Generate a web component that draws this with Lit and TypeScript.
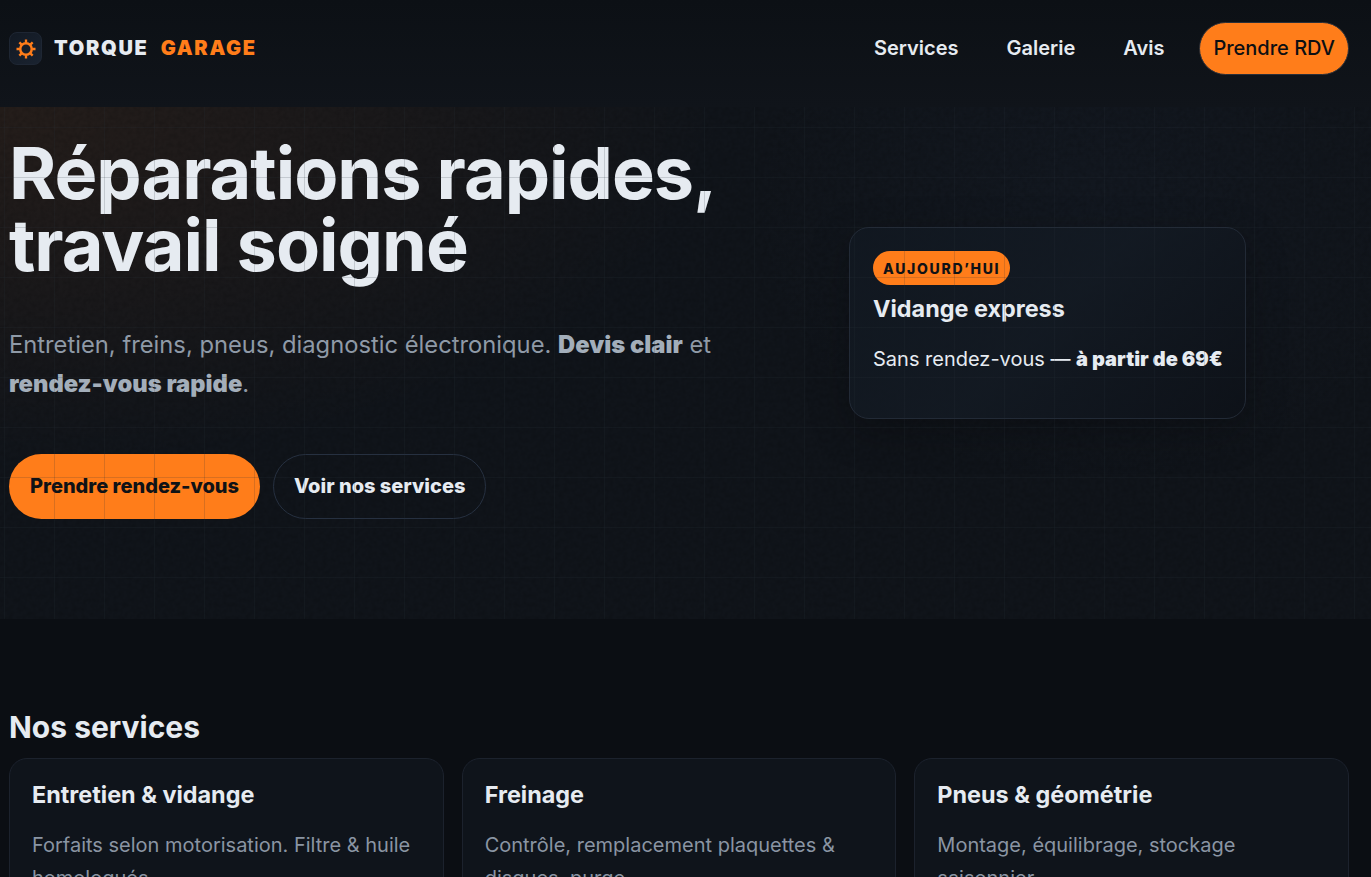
import { LitElement, html, css, unsafeCSS } from "lit";
import { customElement } from "lit/decorators.js";

const noise = unsafeCSS(`url("data:image/svg+xml,%3Csvg xmlns='http://www.w3.org/2000/svg' width='300' height='300'%3E%3Cfilter id='n'%3E%3CfeTurbulence type='fractalNoise' baseFrequency='.22' numOctaves='2' stitchTiles='stitch'/%3E%3CfeColorMatrix values='0 0 0 0 0  0 0 0 0 0  0 0 0 0 0  1.6 0 0 0 -.55'/%3E%3C/filter%3E%3Crect width='300' height='300' opacity='.16' filter='url(%23n)'/%3E%3C/svg%3E")`);

@customElement("app-root")
export class AppRoot extends LitElement {
  static styles = css`
    :host {
      display: block;
      min-height: 877px;
      background: #0b0e13;
      color: #e6ebf1;
      font-family: Inter, "Liberation Sans", sans-serif;
    }
    header {
      height: 107px;
      display: flex;
      align-items: flex-start;
      justify-content: space-between;
      padding: 22px 22px 0 9px;
      background: linear-gradient(180deg, #0c1015, #10141a);
      box-sizing: border-box;
    }
    .brand { display: flex; align-items: center; gap: 12px; height: 53px; }
    .logo {
      width: 33px; height: 33px; box-sizing: border-box;
      border-radius: 8px;
      border: 1px solid #1e2633;
      background: linear-gradient(135deg, #121923, #1a2330);
      display: flex; align-items: center; justify-content: center;
    }
    .logo svg { width: 20px; height: 20px; display: block; }
    .name {
      font-weight: 900; font-size: 20px; letter-spacing: 1.7px; word-spacing: 6.5px; white-space: pre;
      padding-bottom: 2px;
    }
    .name b { color: #ff7d1a; font-weight: 900; }
    nav { display: flex; align-items: center; gap: 48px; height: 53px; }
    nav a { font-weight: 600; font-size: 20px; color: #e6ebf1; padding-bottom: 2px; }
    nav a.rdv {
      background: #ff7d1a; color: #0c0f13; font-weight: 500; font-size: 20px;
      height: 53px; padding: 0 13px 2px; border-radius: 27px;
      display: flex; align-items: center; margin-left: -13px;
      border: 1px solid #2a2f38; box-sizing: border-box;
    }
    .hero {
      position: relative;
      height: 512px;
      box-sizing: border-box;
      padding: 29px 125px 100px 9px;
      display: grid;
      grid-template-columns: 1fr 397px;
      align-items: center;
      background:
        ${noise},
        radial-gradient(1000px 500px at 0% 0%, rgba(255,125,26,.085), transparent 72%),
        radial-gradient(500px 400px at 80% 20%, rgba(60,90,140,.05), transparent 70%),
        #10141a;
      overflow: hidden;
    }
    h1 {
      margin: 1px 0 0;
      font-size: 72px; line-height: 72px; font-weight: 700; letter-spacing: -1px;
      color: #e6ebf1;
    }
    .lead {
      margin: 44.3px 0 0;
      font-size: 23.76px; line-height: 39px; color: #8f9aa7; font-weight: 400; max-width: 720px;
    }
    .lead b { font-weight: 900; color: #a3aeba; }
    .cta { display: flex; gap: 13px; margin-top: 50.7px; }
    .btn {
      height: 65px; box-sizing: border-box; border-radius: 33px;
      display: flex; align-items: center; padding: 0 21px 1px;
      font-size: 20px; font-weight: 800;
    }
    .btn.primary { background: #ff7d1a; color: #0f1216; }
    .btn.ghost { border: 1px solid #263040; color: #e6ebf1; padding: 0 20px 1px; }
    .card {
      width: 397px; height: 192px; box-sizing: border-box;
      border: 1px solid #222a36; border-radius: 20px;
      padding: 23px;
      margin-bottom: 9px;
      background: linear-gradient(135deg, rgba(17,24,33,.85), rgba(19,26,35,.85) 50%, rgba(13,17,24,.85));
      box-shadow: 0 12px 40px rgba(0,0,0,.25);
    }
    .badge {
      display: inline-flex; align-items: center; height: 34px; box-sizing: border-box;
      padding: 0 10px; border-radius: 17px;
      background: #ff7d1a; color: #0f1216;
      font-weight: 800; font-size: 14px; letter-spacing: 1.7px;
    }
    .card h3 { margin: 10px 0 0; font-size: 23.4px; line-height: 28px; font-weight: 700; }
    .card p { margin: 22px 0 0; font-size: 20px; line-height: 28px; white-space: nowrap; }
    .card p b { font-weight: 900; }
    .overlay {
      position: absolute; inset: 0; pointer-events: none;
      background-image:
        linear-gradient(to right, rgba(40,50,60,.18) 1px, transparent 1px),
        linear-gradient(to bottom, rgba(40,50,60,.18) 1px, transparent 1px);
      background-size: 50px 50px;
      background-position: 4px 20px;
    }
    .services { padding: 90px 22px 0 9px; }
    h2 { margin: 0; font-size: 30px; line-height: 36px; font-weight: 700; }
    .grid { display: grid; grid-template-columns: repeat(3, 1fr); gap: 18px; margin-top: 13px; }
    .svc {
      border: 1px solid #1c222d; border-radius: 18px; background: #0f141b;
      padding: 22px; box-sizing: border-box;
    }
    .svc h3 { margin: 0; font-size: 23.4px; line-height: 28px; font-weight: 700; }
    .svc p { margin: 19.5px 0 0; font-size: 20px; line-height: 33px; color: #8a95a3; }
  `;

  render() {
    return html`
      <header>
        <div class="brand">
          <span class="logo">
            <svg viewBox="0 0 24 24" fill="none" stroke="#ff7d1a">
              <circle cx="12" cy="12" r="6.9" stroke-width="3"/>
              <path stroke-width="2.8" d="M12 .6v4M12 19.4v4M.6 12h4M19.4 12h4M4 4l2.8 2.8M17.2 17.2L20 20M4 20l2.8-2.8M17.2 6.8L20 4"/>
            </svg>
          </span>
          <span class="name">TORQUE <b>GARAGE</b></span>
        </div>
        <nav>
          <a>Services</a><a>Galerie</a><a>Avis</a>
          <a class="rdv">Prendre RDV</a>
        </nav>
      </header>
      <section class="hero">
        <div>
          <h1>Réparations rapides,<br />travail soigné</h1>
          <p class="lead">Entretien, freins, pneus, diagnostic électronique. <b>Devis clair</b> et <b>rendez-vous rapide</b>.</p>
          <div class="cta">
            <a class="btn primary">Prendre rendez-vous</a>
            <a class="btn ghost">Voir nos services</a>
          </div>
        </div>
        <div class="card">
          <span class="badge">AUJOURD’HUI</span>
          <h3>Vidange express</h3>
          <p>Sans rendez-vous — <b>à partir de 69€</b></p>
        </div>
        <div class="overlay"></div>
      </section>
      <section class="services">
        <h2>Nos services</h2>
        <div class="grid">
          <div class="svc"><h3>Entretien &amp; vidange</h3><p>Forfaits selon motorisation. Filtre &amp; huile homologués.</p></div>
          <div class="svc"><h3>Freinage</h3><p>Contrôle, remplacement plaquettes &amp; disques, purge.</p></div>
          <div class="svc"><h3>Pneus &amp; géométrie</h3><p>Montage, équilibrage, stockage saisonnier.</p></div>
        </div>
      </section>
    `;
  }
}
